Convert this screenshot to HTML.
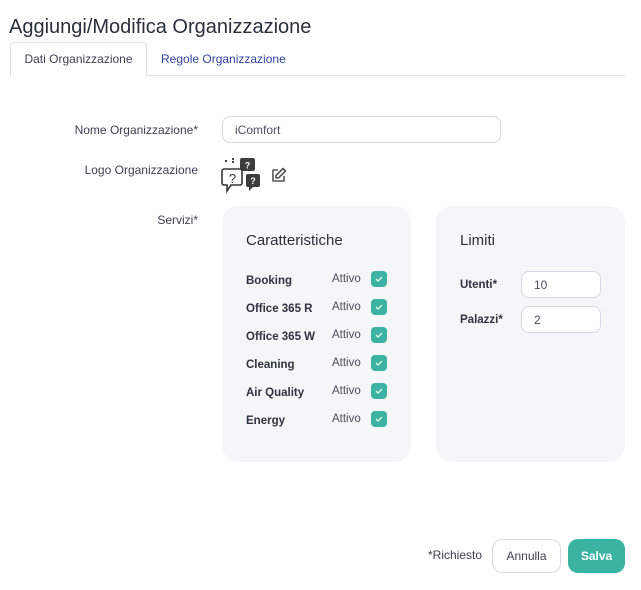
<!DOCTYPE html>
<html><head><style>
body{margin:0;width:641px;height:590px;background:#fff;font-family:"Liberation Sans",sans-serif;color:#2d3340;position:relative;overflow:hidden}
.a{position:absolute}
.lbl{font-size:12px;color:#3c4250;text-align:right;width:190px;left:8px}
.inp{position:absolute;border:1px solid #d5dae2;border-radius:8px;background:#fff;font-size:12px;color:#4a5060;box-sizing:border-box;padding-left:12px;display:flex;align-items:center}
.panel{position:absolute;background:#f5f6f8;border-radius:16px;top:206px;height:256px;width:189px}
.row{position:absolute;left:24px;font-size:11.5px;font-weight:bold;color:#2d3340}
.att{position:absolute;left:110px;font-size:11.5px;color:#4a5060}
.cb{position:absolute;left:149px;width:16px;height:16px;border-radius:4px;background:#3bb3a3}
.cb svg{position:absolute;left:3px;top:3px}
</style></head><body>
<div class="a" style="left:9px;top:16px;font-size:20px;color:#2a2f3a">Aggiungi/Modifica Organizzazione</div>
<div class="a" style="left:10px;top:75px;width:615px;height:1px;background:#dfe3e8"></div>
<div class="a" style="left:10px;top:42px;width:135px;height:33px;border:1px solid #dfe3e8;border-bottom:1px solid #fff;border-radius:4px 4px 0 0;background:#fff;font-size:12px;color:#3c4250;text-align:center;line-height:33px">Dati Organizzazione</div>
<div class="a" style="left:161px;top:52px;font-size:12px;color:#2e45a0">Regole Organizzazione</div>
<div class="a lbl" style="top:123px">Nome Organizzazione*</div>
<div class="inp" style="left:222px;top:116px;width:279px;height:27px">iComfort</div>
<div class="a lbl" style="top:163px">Logo Organizzazione</div>
<svg class="a" style="left:221px;top:156px" width="40" height="38" viewBox="0 0 40 38">
<rect x="4" y="4" width="2" height="2" fill="#444"/><rect x="11" y="2" width="2" height="2" fill="#444"/><rect x="11" y="5" width="2" height="2" fill="#444"/>
<rect x="19" y="2" width="15" height="13" rx="2" fill="#3d3d3d"/><text x="26.5" y="12.5" font-size="9" font-weight="bold" fill="#fff" text-anchor="middle" font-family="Liberation Sans">?</text>
<path d="M3 13 h16 a2 2 0 0 1 2 2 v12 a2 2 0 0 1 -2 2 h-9 l-4 6 v-6 h-3 a2 2 0 0 1 -2 -2 v-12 a2 2 0 0 1 2 -2z" fill="#fff" stroke="#333" stroke-width="1.6"/>
<text x="11.5" y="27" font-size="13" fill="#333" text-anchor="middle" font-family="Liberation Sans">?</text>
<rect x="25" y="18" width="14" height="13" rx="2" fill="#3d3d3d"/><path d="M28 31 l0 4 l4 -4z" fill="#3d3d3d"/><text x="32" y="28" font-size="9" font-weight="bold" fill="#fff" text-anchor="middle" font-family="Liberation Sans">?</text>
</svg>
<svg class="a" style="left:270px;top:167px" width="17" height="17" viewBox="0 0 17 17" fill="none" stroke="#555" stroke-width="1.6" stroke-linejoin="round"><path d="M8 3H3v11h11V9"/><path d="M13 1.5l2.5 2.5-7 7H6v-2.5z"/></svg>
<div class="a lbl" style="top:213px">Servizi*</div>
<div class="panel" style="left:222px">
<div class="a" style="left:24px;top:26px;font-size:15px;color:#2a2f3a">Caratteristiche</div>
<div class="row" style="top:69px">Booking</div><div class="att" style="top:67px">Attivo</div><div class="cb" style="top:65px"><svg width="10" height="10" viewBox="0 0 10 10"><path d="M2 5l2 2 4-4" stroke="#fff" stroke-width="1.2" fill="none"/></svg></div>
<div class="row" style="top:97px">Office 365 R</div><div class="att" style="top:95px">Attivo</div><div class="cb" style="top:93px"><svg width="10" height="10" viewBox="0 0 10 10"><path d="M2 5l2 2 4-4" stroke="#fff" stroke-width="1.2" fill="none"/></svg></div>
<div class="row" style="top:125px">Office 365 W</div><div class="att" style="top:123px">Attivo</div><div class="cb" style="top:121px"><svg width="10" height="10" viewBox="0 0 10 10"><path d="M2 5l2 2 4-4" stroke="#fff" stroke-width="1.2" fill="none"/></svg></div>
<div class="row" style="top:153px">Cleaning</div><div class="att" style="top:151px">Attivo</div><div class="cb" style="top:149px"><svg width="10" height="10" viewBox="0 0 10 10"><path d="M2 5l2 2 4-4" stroke="#fff" stroke-width="1.2" fill="none"/></svg></div>
<div class="row" style="top:181px">Air Quality</div><div class="att" style="top:179px">Attivo</div><div class="cb" style="top:177px"><svg width="10" height="10" viewBox="0 0 10 10"><path d="M2 5l2 2 4-4" stroke="#fff" stroke-width="1.2" fill="none"/></svg></div>
<div class="row" style="top:209px">Energy</div><div class="att" style="top:207px">Attivo</div><div class="cb" style="top:205px"><svg width="10" height="10" viewBox="0 0 10 10"><path d="M2 5l2 2 4-4" stroke="#fff" stroke-width="1.2" fill="none"/></svg></div>
</div>
<div class="panel" style="left:436px">
<div class="a" style="left:24px;top:26px;font-size:15px;color:#2a2f3a">Limiti</div>
<div class="row" style="top:73px">Utenti*</div>
<div class="row" style="top:108px">Palazzi*</div>
</div>
<div class="inp" style="left:521px;top:271px;width:80px;height:27px">10</div>
<div class="inp" style="left:521px;top:306px;width:80px;height:27px">2</div>
<div class="a" style="left:428px;top:548px;font-size:12px;color:#3c4250">*Richiesto</div>
<div class="a" style="left:492px;top:539px;width:69px;height:34px;box-sizing:border-box;border:1px solid #d5dae2;border-radius:10px;font-size:12px;color:#3c4250;text-align:center;line-height:32px">Annulla</div>
<div class="a" style="left:568px;top:539px;width:57px;height:34px;border-radius:10px;background:#3bb3a3;font-size:12px;font-weight:bold;color:#fff;text-align:center;line-height:34px">Salva</div>
</body></html>
